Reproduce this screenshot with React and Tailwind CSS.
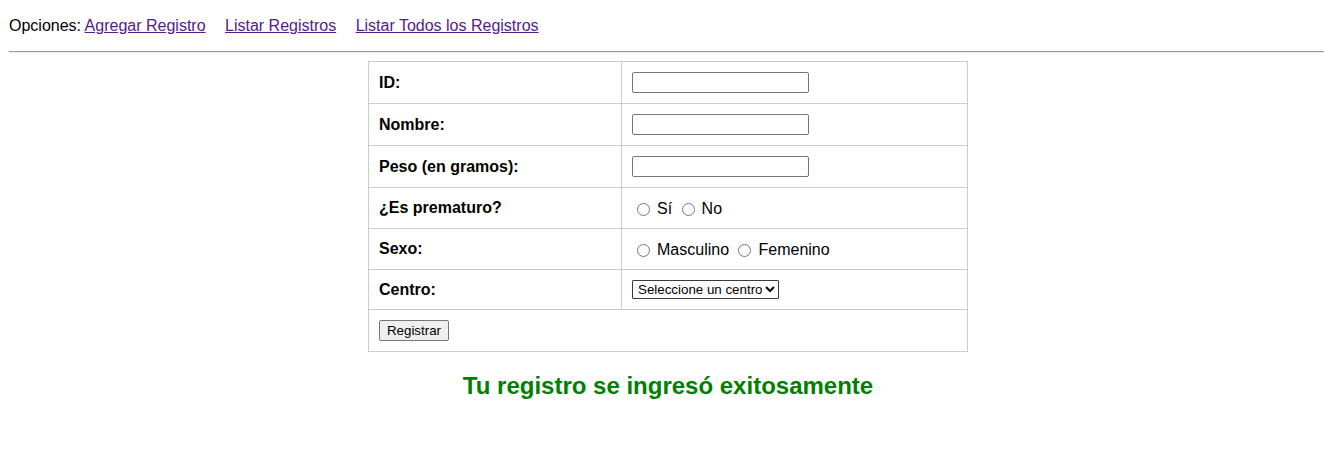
export default function App() {
  const rows = [
    { label: 'ID:', kind: 'text' },
    { label: 'Nombre:', kind: 'text' },
    { label: 'Peso (en gramos):', kind: 'text' },
  ]

  return (
    <div className="w-screen overflow-hidden bg-white text-black font-['Liberation_Sans',Arial,sans-serif] text-[16px]">
      <div className="w-[1318px] ml-[9px] pt-[17px] pb-10">

        {/* ── Opciones ─────────────────────────────────────────── */}
        <p className="leading-[18px]">
          Opciones:{' '}
          <a href="#" className="underline text-[#551a8b] mr-[15px]">Agregar Registro</a>{' '}
          <a href="#" className="underline text-[#551a8b] mr-[15px]">Listar Registros</a>{' '}
          <a href="#" className="underline text-[#551a8b]">Listar Todos los Registros</a>
        </p>

        <hr className="mt-4 mb-[8px] h-[2px] border-t border-b border-t-[#9a9a9a] border-b-[#eeeeee]" />

        {/* ── Formulario ───────────────────────────────────────── */}
        <table className="mx-auto w-[600px] border-collapse border border-[#cccccc]">
          <tbody>
            {rows.map(r => (
              <tr key={r.label} className="h-[42px]">
                <td className="w-[253px] border border-[#cccccc] px-[10px] font-bold">{r.label}</td>
                <td className="border border-[#cccccc] px-[10px]">
                  <input
                    type="text"
                    className="block w-[177px] h-[21px] border border-[#767676] rounded-[2px] px-[2px] text-[13.33px]"
                  />
                </td>
              </tr>
            ))}

            <tr className="h-[41px]">
              <td className="border border-[#cccccc] px-[10px] font-bold">¿Es prematuro?</td>
              <td className="border border-[#cccccc] px-[10px] pt-[3px]">
                <label className="inline-flex items-center">
                  <input type="radio" name="prem" className="w-[13px] h-[13px] ml-[5px] mr-[3px] mt-[1px]" />
                  <span className="ml-[4px]">Sí</span>
                </label>{' '}
                <label className="inline-flex items-center">
                  <input type="radio" name="prem" className="w-[13px] h-[13px] ml-[5px] mr-[3px] mt-[1px]" />
                  <span className="ml-[4px]">No</span>
                </label>
              </td>
            </tr>

            <tr className="h-[41px]">
              <td className="border border-[#cccccc] px-[10px] font-bold">Sexo:</td>
              <td className="border border-[#cccccc] px-[10px] pt-[3px]">
                <label className="inline-flex items-center">
                  <input type="radio" name="sexo" className="w-[13px] h-[13px] ml-[5px] mr-[3px] mt-[1px]" />
                  <span className="ml-[4px]">Masculino</span>
                </label>{' '}
                <label className="inline-flex items-center">
                  <input type="radio" name="sexo" className="w-[13px] h-[13px] ml-[5px] mr-[3px] mt-[1px]" />
                  <span className="ml-[4px]">Femenino</span>
                </label>
              </td>
            </tr>

            <tr className="h-[40px]">
              <td className="border border-[#cccccc] px-[10px] font-bold">Centro:</td>
              <td className="border border-[#cccccc] px-[10px]">
                <select className="block w-[147px] h-[19px] border border-[#3b3b3b] rounded-[1px] bg-white text-[13.33px] leading-[15px] pl-[1px]">
                  <option>Seleccione un centro</option>
                </select>
              </td>
            </tr>

            <tr className="h-[42px]">
              <td colSpan={2} className="border border-[#cccccc] px-[10px]">
                <button
                  type="button"
                  className="block w-[70px] h-[21px] border border-[#767676] rounded-[2px] bg-[#efefef] text-[13.33px] leading-[15px]"
                >
                  Registrar
                </button>
              </td>
            </tr>
          </tbody>
        </table>

        <h2 className="mt-[20px] text-center text-[24px] leading-[28px] font-bold text-[#008000]">
          Tu registro se ingresó exitosamente
        </h2>
      </div>
    </div>
  )
}
